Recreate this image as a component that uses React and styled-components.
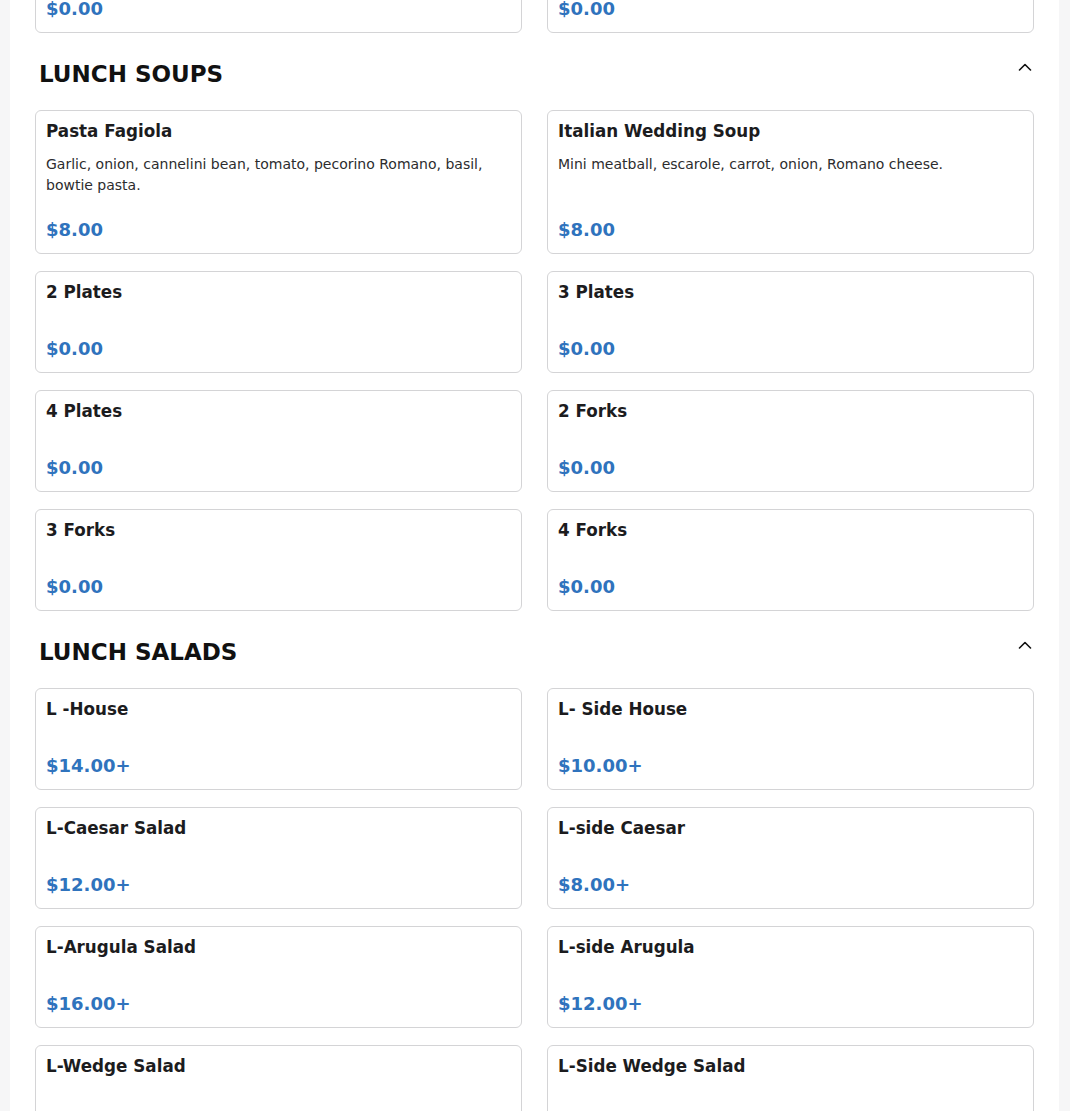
import React from 'react';
import styled, { createGlobalStyle } from 'styled-components';

const GlobalStyle = createGlobalStyle`
    html, body {
        margin: 0;
        padding: 0;
        background-color: #f6f6f7;
        font-family: "DejaVu Sans", "Noto Sans", sans-serif;
        color: #1c1c1e;
    }
`;

const Page = styled.div`
    margin: -69px 11px 0 10px;
    padding: 0 25px 40px;
    background-color: #fff;
    min-height: 1200px;
`;

const Section = styled.section``;

const Header = styled.div`
    display: flex;
    justify-content: space-between;
    align-items: flex-start;
    padding: 21px 2px 23px 4px;
`;

const SectionTitle = styled.h2`
    margin: 0;
    padding-top: 7px;
    font-size: 23px;
    line-height: 26px;
    font-weight: 700;
    color: #111;
`;

const Toggle = styled.button`
    border: none;
    background: none;
    padding: 0;
    margin-top: 9px;
    width: 14px;
    height: 8px;
    display: flex;
    cursor: pointer;
`;

const Grid = styled.div`
    display: grid;
    grid-template-columns: 1fr 1fr;
    gap: 17px 25px;
`;

const Card = styled.div`
    display: flex;
    flex-direction: column;
    border: 1px solid #d4d4d6;
    border-radius: 6px;
    padding: 10px;
    background-color: #fff;
`;

const ItemName = styled.div`
    font-size: 16.75px;
    line-height: 20px;
    font-weight: 700;
    color: #1c1c1e;
    margin-bottom: 13px;
`;

const Description = styled.p`
    flex: 1;
    margin: 0;
    font-size: 14px;
    line-height: 21px;
    color: #2c2c2e;
`;

const Price = styled.div`
    margin-top: 20px;
    font-size: 18px;
    line-height: 27px;
    font-weight: 700;
    color: #2f73bd;
`;

const ChevronUp = () => (
    <svg width="14" height="8" viewBox="0 0 14 8" fill="none">
        <polyline points="1.5,7 7,1.5 12.5,7" stroke="#111" strokeWidth="1.6" strokeLinecap="round" strokeLinejoin="round" />
    </svg>
);

const sections = [
    {
        title: null,
        items: [
            { name: '5 Plates', price: '$0.00' },
            { name: '5 Forks', price: '$0.00' },
        ],
    },
    {
        title: 'LUNCH SOUPS',
        items: [
            { name: 'Pasta Fagiola', desc: 'Garlic, onion, cannelini bean, tomato, pecorino Romano, basil, bowtie pasta.', price: '$8.00' },
            { name: 'Italian Wedding Soup', desc: 'Mini meatball, escarole, carrot, onion, Romano cheese.', price: '$8.00' },
            { name: '2 Plates', price: '$0.00' },
            { name: '3 Plates', price: '$0.00' },
            { name: '4 Plates', price: '$0.00' },
            { name: '2 Forks', price: '$0.00' },
            { name: '3 Forks', price: '$0.00' },
            { name: '4 Forks', price: '$0.00' },
        ],
    },
    {
        title: 'LUNCH SALADS',
        items: [
            { name: 'L -House', price: '$14.00+' },
            { name: 'L- Side House', price: '$10.00+' },
            { name: 'L-Caesar Salad', price: '$12.00+' },
            { name: 'L-side Caesar', price: '$8.00+' },
            { name: 'L-Arugula Salad', price: '$16.00+' },
            { name: 'L-side Arugula', price: '$12.00+' },
            { name: 'L-Wedge Salad', price: '$14.00+' },
            { name: 'L-Side Wedge Salad', price: '$10.00+' },
        ],
    },
];

const MenuItem = ({ item }) => (
    <Card>
        <ItemName>{item.name}</ItemName>
        <Description>{item.desc || ''}</Description>
        <Price>{item.price}</Price>
    </Card>
);

export default function App() {
    return (
        <>
            <GlobalStyle />
            <Page>
                {sections.map((section, i) => (
                    <Section key={i}>
                        {section.title && (
                            <Header>
                                <SectionTitle>{section.title}</SectionTitle>
                                <Toggle aria-label="Collapse"><ChevronUp /></Toggle>
                            </Header>
                        )}
                        <Grid>
                            {section.items.map((item) => <MenuItem key={item.name} item={item} />)}
                        </Grid>
                    </Section>
                ))}
            </Page>
        </>
    );
}
